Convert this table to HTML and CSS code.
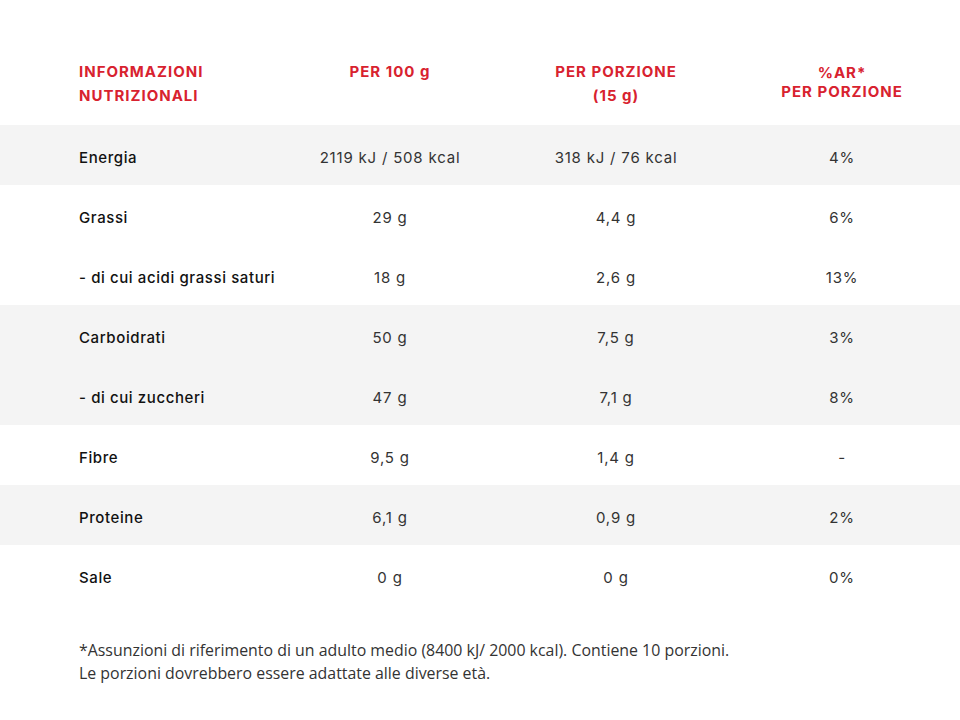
FILE: index.html
```html
<!DOCTYPE html>
<html lang="it">
<head>
<meta charset="utf-8">
<title>Informazioni nutrizionali</title>
<link rel="stylesheet" href="styles.css">
</head>
<body>
<div class="page">
  <div class="row head">
    <div class="c lbl h">INFORMAZIONI<br>NUTRIZIONALI</div>
    <div class="c h">PER 100 g</div>
    <div class="c h">PER PORZIONE<br>(15 g)</div>
    <div class="c h tight">%AR*<br>PER PORZIONE</div>
  </div>
  <div class="row shade"><div class="c lbl">Energia</div><div class="c">2119 kJ / 508 kcal</div><div class="c">318 kJ / 76 kcal</div><div class="c">4%</div></div>
  <div class="row"><div class="c lbl">Grassi</div><div class="c">29 g</div><div class="c">4,4 g</div><div class="c">6%</div></div>
  <div class="row"><div class="c lbl">- di cui acidi grassi saturi</div><div class="c">18 g</div><div class="c">2,6 g</div><div class="c">13%</div></div>
  <div class="row shade"><div class="c lbl">Carboidrati</div><div class="c">50 g</div><div class="c">7,5 g</div><div class="c">3%</div></div>
  <div class="row shade"><div class="c lbl">- di cui zuccheri</div><div class="c">47 g</div><div class="c">7,1 g</div><div class="c">8%</div></div>
  <div class="row"><div class="c lbl">Fibre</div><div class="c">9,5 g</div><div class="c">1,4 g</div><div class="c">-</div></div>
  <div class="row shade"><div class="c lbl">Proteine</div><div class="c">6,1 g</div><div class="c">0,9 g</div><div class="c">2%</div></div>
  <div class="row"><div class="c lbl">Sale</div><div class="c">0 g</div><div class="c">0 g</div><div class="c">0%</div></div>
  <p class="note">*Assunzioni di riferimento di un adulto medio (8400 kJ/ 2000 kcal). Contiene 10 porzioni.<br>Le porzioni dovrebbero essere adattate alle diverse età.</p>
</div>
</body>
</html>
```
FILE: styles.css
```css
html, body { margin: 0; padding: 0; background: #fff; }
body { font-family: Inter, "DejaVu Sans", sans-serif; color: #333; }
.page { padding-top: 60px; }
.row {
  display: grid;
  grid-template-columns: 198px 226px 226px 226px;
  padding-left: 79px;
  height: 60px;
  align-items: center;
}
.row.shade { background: #f4f4f4; }
.row.head { height: 65px; align-items: start; }
.c { text-align: center; font-size: 15px; color: #333; padding-top: 5px; letter-spacing: 0.8px; }
.c.lbl { text-align: left; color: #111; font-weight: 500; letter-spacing: 0.6px; }
.c.h { color: #d8222f; font-weight: 700; font-size: 15px; line-height: 24px; padding-top: 0; letter-spacing: 1px; }
.c.h.tight { line-height: 19px; padding-top: 3px; }
.note {
  margin: 34px 0 0 79px;
  font-family: "Open Sans", sans-serif;
  font-size: 15.9px;
  line-height: 23px;
  color: #333;
  letter-spacing: 0;
}
```
